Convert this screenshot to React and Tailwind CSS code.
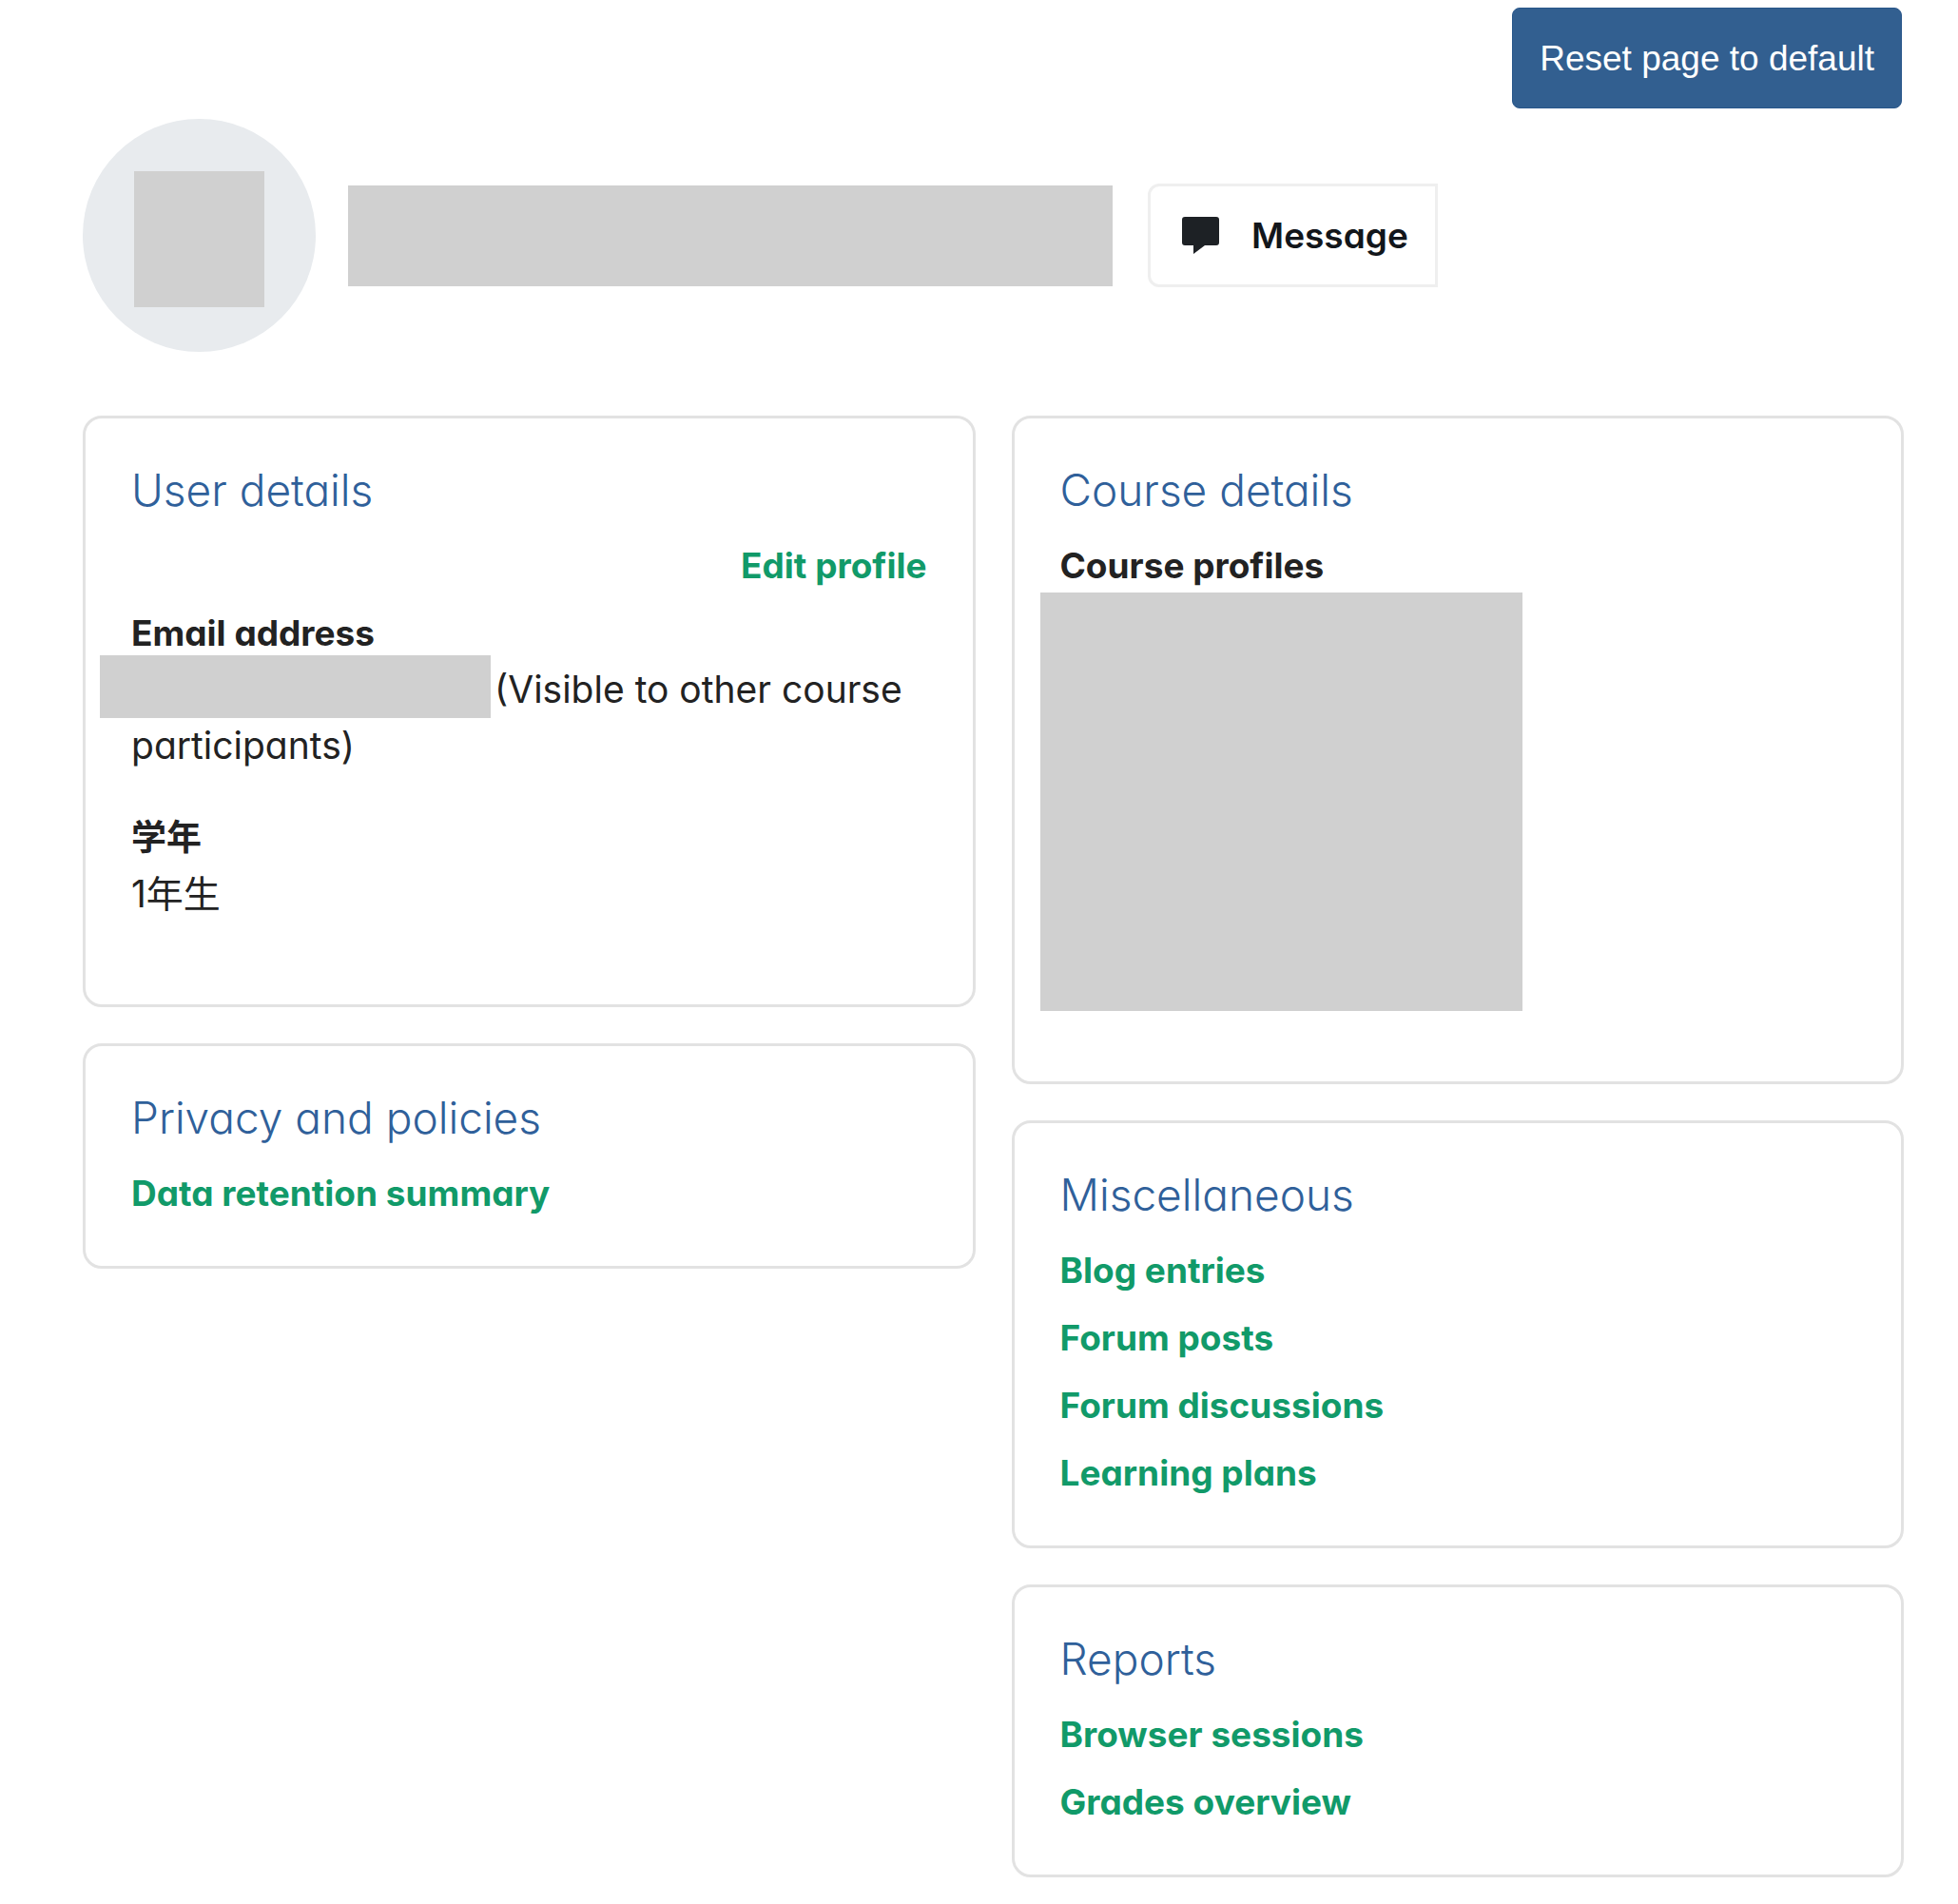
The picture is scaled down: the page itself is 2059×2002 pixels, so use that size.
function Card({ title, children }) {
  return (
    <section className="rounded-[20px] border-3 border-[#e2e2e2] p-12">
      <h3 className="mb-6 text-[46px] leading-[54px] font-light text-[#2f609a]">{title}</h3>
      {children}
    </section>
  )
}

function Links({ items }) {
  return (
    <ul className="flex flex-col gap-[14px]">
      {items.map((item) => (
        <li key={item}>
          <a href="#" className="font-bold text-[#119a69]">{item}</a>
        </li>
      ))}
    </ul>
  )
}

export default function App() {
  return (
    <div className="min-h-screen bg-white pt-2 pr-[57px] pb-6 pl-[87px] font-[Inter,'Noto_Sans_CJK_JP',sans-serif] text-[37px] leading-[57px] text-[#222] [font-feature-settings:'cv11']">
      <div className="flex justify-end pr-0.5">
        <button type="button" className="h-[106px] rounded-lg border border-[#28568a] bg-[#325f90] px-7 font-['Liberation_Sans',Arial,sans-serif] text-white">
          Reset page to default
        </button>
      </div>

      <header className="mt-[11px] flex items-center">
        <div className="flex size-[245px] shrink-0 items-center justify-center rounded-full bg-[#e8ebee] pt-2">
          <div className="h-[143px] w-[137px] bg-[#d0d0d0]" />
        </div>
        <div className="ml-[34px] h-[106px] w-[804px] bg-[#d0d0d0]" />
        <button type="button" className="ml-[37px] flex h-[109px] items-center gap-[34px] rounded-l-xl border-3 border-[#efefef] pr-7 pl-[33px] font-semibold text-[#12161b]">
          <svg viewBox="0 0 39 39" className="size-[39px]" fill="#1d2125" aria-hidden="true">
            <path d="M3 0h33q3 0 3 3v24q0 3-3 3H24L12 39V30H3q-3 0-3-3V3q0-3 3-3z" />
          </svg>
          Message
        </button>
      </header>

      <main className="mt-[67px] grid grid-cols-2 items-start gap-[38px]">
        <div className="flex flex-col gap-[38px]">
          <Card title="User details">
            <div className="mb-[14px] text-right">
              <a href="#" className="font-bold text-[#119a69]">Edit profile</a>
            </div>
            <dl>
              <dt className="mb-[2px] font-bold">Email address</dt>
              <dd className="mb-10 text-[39px]">
                <span className="-mt-3 mr-1 -ml-[33px] inline-block h-[66px] w-[411px] bg-[#d0d0d0] align-middle" />
                (Visible to other course participants)
              </dd>
              <dt className="mb-[2px] font-bold">学年</dt>
              <dd className="mb-10 text-[39px]">1年生</dd>
            </dl>
          </Card>
          <Card title="Privacy and policies">
            <Links items={['Data retention summary']} />
          </Card>
        </div>

        <div className="flex flex-col gap-[38px]">
          <Card title="Course details">
            <h4 className="font-bold">Course profiles</h4>
            <div className="mb-[26px] -ml-[21px] h-[440px] w-[507px] bg-[#d0d0d0]" />
          </Card>
          <Card title="Miscellaneous">
            <Links items={['Blog entries', 'Forum posts', 'Forum discussions', 'Learning plans']} />
          </Card>
          <Card title="Reports">
            <Links items={['Browser sessions', 'Grades overview']} />
          </Card>
        </div>
      </main>
    </div>
  )
}
